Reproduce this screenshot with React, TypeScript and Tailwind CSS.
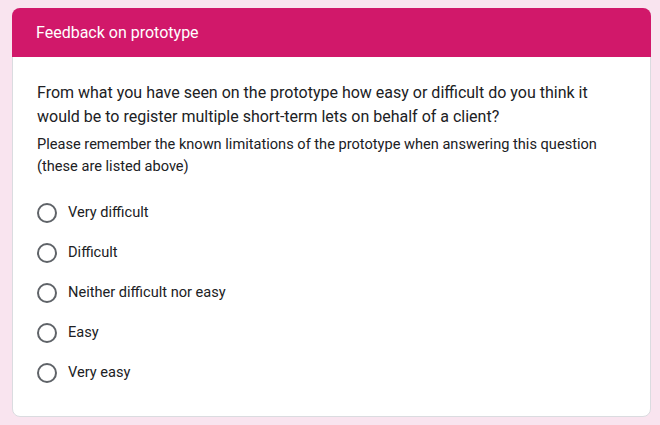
const options = [
  "Very difficult",
  "Difficult",
  "Neither difficult nor easy",
  "Easy",
  "Very easy",
];

export default function App() {
  return (
    <div className="min-h-screen w-full bg-[#f9e4ef] pt-[8px] font-['Roboto',sans-serif] text-[#202124]">
      <div className="ml-[12px] w-[639px] rounded-[8px] border border-[#dadce0] bg-white">
        <div className="-mx-px -mt-px flex h-[49px] items-center rounded-t-[8px] bg-[#d1186a] px-[24px] text-[16px] text-white">
          Feedback on prototype
        </div>
        <div className="px-[24px] pt-[24px] pb-[23px]">
          <div className="text-[16px] leading-[24px]">
            From what you have seen on the prototype how easy or difficult do you think it
            <br />
            would be to register multiple short-term lets on behalf of a client?
          </div>
          <div className="mt-[4px] text-[14.6px] leading-[22px]">
            Please remember the known limitations of the prototype when answering this question
            <br />
            (these are listed above)
          </div>
          <div className="mt-[16px] flex flex-col">
            {options.map((o) => (
              <label key={o} className="flex h-[40px] items-center gap-[11px]">
                <span className="h-[20px] w-[20px] shrink-0 rounded-full border-2 border-[#5f6368]" />
                <span className="text-[14.6px]">{o}</span>
              </label>
            ))}
          </div>
        </div>
      </div>
    </div>
  );
}
